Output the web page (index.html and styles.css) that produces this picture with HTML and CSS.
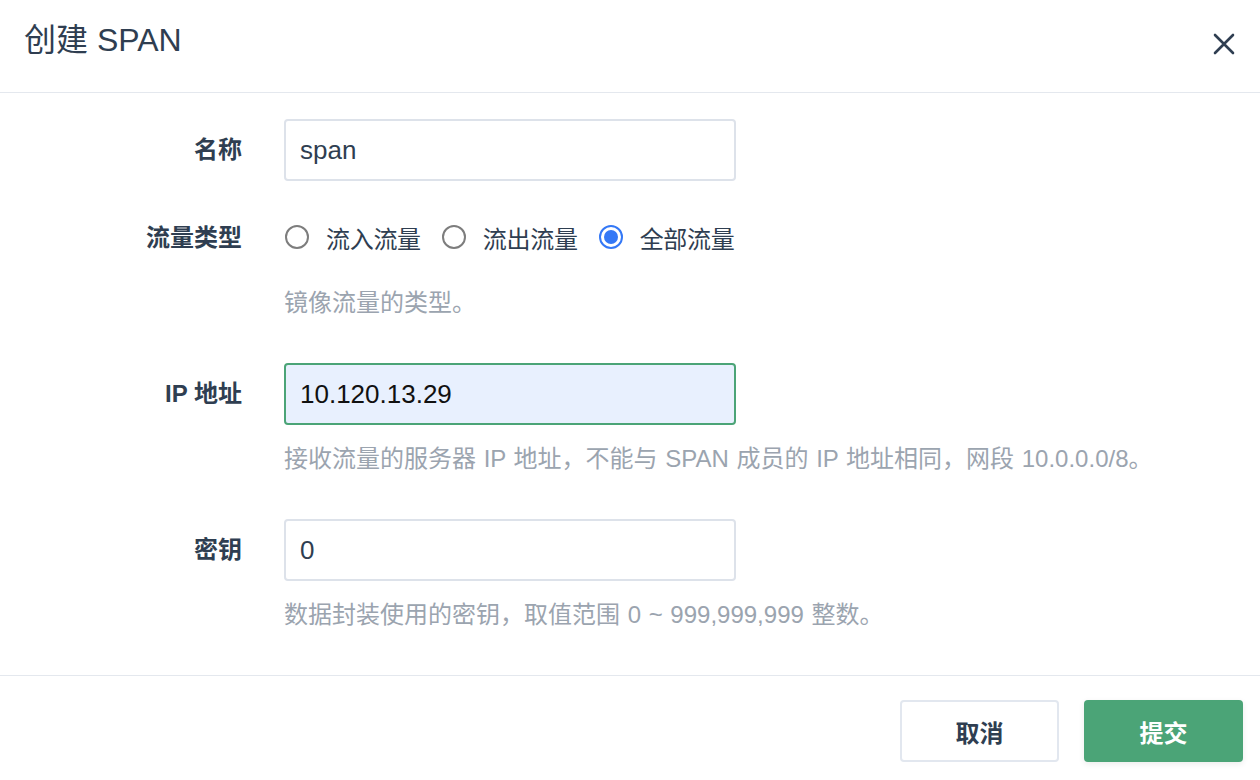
FILE: index.html
```html
<!DOCTYPE html>
<html lang="zh-CN">
<head>
<meta charset="utf-8">
<title>创建 SPAN</title>
<link rel="stylesheet" href="styles.css">
</head>
<body>
<div class="modal">
  <header class="modal-header">
    <h1 class="modal-title">创建 SPAN</h1>
    <button class="modal-close" type="button" aria-label="关闭">
      <svg width="22" height="22" viewBox="0 0 22 22"><path d="M2 2L20 20M20 2L2 20" stroke="#2f3e51" stroke-width="2.6" stroke-linecap="round"/></svg>
    </button>
  </header>
  <div class="modal-body">
    <div class="form-item form-item-name">
      <label class="form-label">名称</label>
      <div class="form-control"><input class="input" type="text" value="span"></div>
    </div>
    <div class="form-item">
      <label class="form-label">流量类型</label>
      <div class="form-control radio-group">
        <label class="radio"><span class="radio-circle"></span><span class="radio-text">流入流量</span></label>
        <label class="radio"><span class="radio-circle"></span><span class="radio-text">流出流量</span></label>
        <label class="radio"><span class="radio-circle checked"></span><span class="radio-text">全部流量</span></label>
      </div>
      <div class="form-help">镜像流量的类型。</div>
    </div>
    <div class="form-item">
      <label class="form-label">IP 地址</label>
      <div class="form-control"><input class="input input-autofill" type="text" value="10.120.13.29"></div>
      <div class="form-help">接收流量的服务器 IP 地址，不能与 SPAN 成员的 IP 地址相同，网段 10.0.0.0/8。</div>
    </div>
    <div class="form-item form-item-last">
      <label class="form-label">密钥</label>
      <div class="form-control"><input class="input" type="text" value="0"></div>
      <div class="form-help">数据封装使用的密钥，取值范围 0 ~ 999,999,999 整数。</div>
    </div>
  </div>
  <footer class="modal-footer">
    <button class="btn btn-default" type="button">取消</button>
    <button class="btn btn-primary" type="button">提交</button>
  </footer>
</div>
</body>
</html>
```
FILE: styles.css
```css
* { box-sizing: border-box; }
html, body { margin: 0; padding: 0; background: #fff; }
body {
  font-family: "Liberation Sans", "Noto Sans CJK SC", sans-serif;
  color: #2f3e51;
  width: 1260px;
  height: 780px;
  overflow: hidden;
}
.modal { display: flex; flex-direction: column; width: 1260px; }
.modal-header {
  height: 93px;
  border-bottom: 1px solid #e4e8ee;
  display: flex;
  align-items: flex-start;
  justify-content: space-between;
  padding: 20px 24px 0 24px;
}
.modal-title {
  margin: 0;
  font-size: 32px;
  line-height: 40px;
  font-weight: 400;
  color: #2f3e51;
}
.modal-close {
  border: 0;
  background: transparent;
  padding: 0;
  margin-top: 13px;
  margin-right: 1px;
  width: 22px;
  height: 22px;
  display: flex;
}
.modal-body { padding: 26px 24px 46px 24px; }
.form-item {
  display: grid;
  grid-template-columns: 218px 452px;
  column-gap: 42px;
  margin-bottom: 46px;
}
.form-item-name { margin-bottom: 26px; }
.form-item-last { margin-bottom: 0; }
.form-label {
  grid-column: 1;
  grid-row: 1;
  text-align: right;
  align-self: center;
  font-size: 24px;
  font-weight: 700;
  color: #2f3e51;
  line-height: 28px;
}
.form-control {
  grid-column: 2;
  grid-row: 1;
  height: 62px;
}
.form-help {
  grid-column: 2 / span 2;
  grid-row: 2;
  margin-top: 20px;
  font-size: 24px;
  line-height: 28px;
  color: #9ba4af;
  white-space: nowrap;
  word-spacing: 1px;
  width: 900px;
}
.input {
  width: 100%;
  height: 62px;
  border: 2px solid #dde2ea;
  border-radius: 4px;
  padding: 0 14px;
  font-family: "Liberation Sans", "Noto Sans CJK SC", sans-serif;
  font-size: 26px;
  color: #2f3e51;
  background: #fff;
  outline: none;
}
.input-autofill {
  background: #e8f0fe;
  border-color: #4ba477;
  color: #111;
}
.radio-group { display: flex; align-items: center; white-space: nowrap; padding-bottom: 2px; }
.radio {
  display: flex;
  align-items: center;
  flex-shrink: 0;
  margin-right: 20px;
  font-size: 24px;
  color: #2f3e51;
}
.radio-text { white-space: nowrap; letter-spacing: -0.3px; }
.radio-circle {
  width: 24px;
  height: 24px;
  flex-shrink: 0;
  border-radius: 50%;
  border: 2px solid #7d7d7d;
  margin-right: 17px;
  margin-left: 1px;
  display: flex;
  align-items: center;
  justify-content: center;
}
.radio-circle.checked { border-color: #3478f6; }
.radio-circle.checked::after {
  content: "";
  width: 14px;
  height: 14px;
  border-radius: 50%;
  background: #3478f6;
}
.modal-footer {
  border-top: 1px solid #e4e8ee;
  padding: 24px 17px 17px 17px;
  display: flex;
  justify-content: flex-end;
  gap: 25px;
}
.btn {
  width: 159px;
  height: 62px;
  border-radius: 4px;
  font-family: "Liberation Sans", "Noto Sans CJK SC", sans-serif;
  font-size: 24px;
  font-weight: 700;
}
.btn-default {
  background: #fff;
  border: 2px solid #e2e7ef;
  color: #2f3e51;
}
.btn-primary {
  background: #4ba477;
  border: 0;
  color: #fff;
  box-shadow: 0 2px 6px rgba(0, 0, 0, 0.08);
}
```
